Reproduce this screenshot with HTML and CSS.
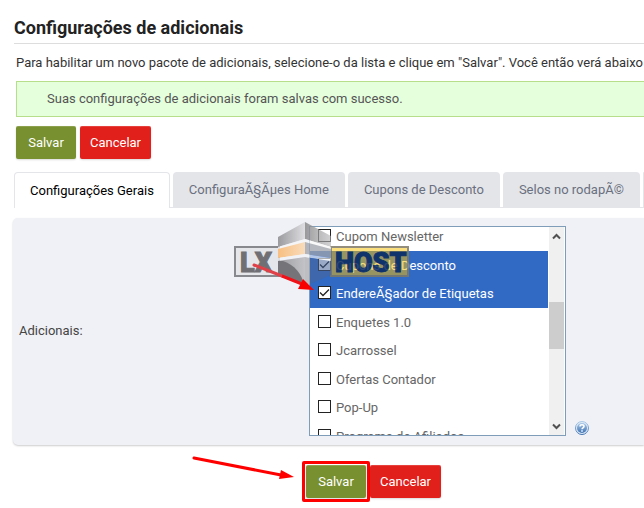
FILE: index.html
```html
<!DOCTYPE html>
<html lang="pt-BR">
<head>
<meta charset="utf-8">
<title>Configurações de adicionais</title>
<link rel="stylesheet" href="styles.css">
</head>
<body>
<main class="page">
  <h1 class="title">Configurações de adicionais</h1>
  <p class="intro">Para habilitar um novo pacote de adicionais, selecione-o da lista e clique em "Salvar". Você então verá abaixo</p>
  <div class="alert" role="status">Suas configurações de adicionais foram salvas com sucesso.</div>
  <div class="actions">
    <button class="btn save" type="button">Salvar</button>
    <button class="btn cancel" type="button">Cancelar</button>
  </div>
  <nav class="tabs">
    <a class="tab active" href="#gerais">Configurações Gerais</a>
    <a class="tab" href="#home">ConfiguraÃ§Ãµes Home</a>
    <a class="tab" href="#cupons">Cupons de Desconto</a>
    <a class="tab" href="#selos">Selos no rodapÃ©</a>
    <span class="tab rest"></span>
  </nav>
  <section class="panel" id="gerais">
    <span class="field-label" id="addons-label">Adicionais:</span>
    <div class="field">
      <div class="listbox" role="group" aria-labelledby="addons-label">
        <div class="options">
          <label class="option"><input type="checkbox">Cupom Newsletter</label>
          <label class="option selected"><input type="checkbox" checked>Cupons de Desconto</label>
          <label class="option selected"><input type="checkbox" checked>EndereÃ§ador de Etiquetas</label>
          <label class="option"><input type="checkbox">Enquetes 1.0</label>
          <label class="option"><input type="checkbox">Jcarrossel</label>
          <label class="option"><input type="checkbox">Ofertas Contador</label>
          <label class="option"><input type="checkbox">Pop-Up</label>
          <label class="option"><input type="checkbox">Programa de Afiliados</label>
        </div>
        <div class="scrollbar">
          <svg width="15" height="17" viewBox="0 0 15 17"><path d="M4 11.500 7.500 8l3.500 3.500" fill="none" stroke="#505050" stroke-width="2"/></svg>
          <div class="thumb"></div>
          <svg width="15" height="17" viewBox="0 0 15 17"><path d="M4 6.500 7.500 10 11 6.500" fill="none" stroke="#505050" stroke-width="2"/></svg>
        </div>
      </div>
      <svg class="help" width="14" height="14" viewBox="0 0 14 14">
        <defs><linearGradient id="hg" x1="0" y1="0" x2="0" y2="1"><stop offset="0" stop-color="#a9c8e8"/><stop offset="1" stop-color="#3f74b4"/></linearGradient></defs>
        <circle cx="7" cy="7" r="6.500" fill="#dfeaf5" stroke="url(#hg)"/>
        <circle cx="7" cy="7" r="5" fill="url(#hg)"/>
        <path d="M5 5.500C5 3.300 9 3.300 9 5.500 9 7 7 6.800 7 8.300M7 9.300v1.500" fill="none" stroke="#fff" stroke-width="1.500"/>
      </svg>
    </div>
    <svg class="watermark" width="176" height="66" viewBox="0 0 176 66">
      <defs>
        <linearGradient id="lt" x1="0" y1="0" x2="1" y2="0"><stop offset="0" stop-color="#8d8d90"/><stop offset="1" stop-color="#dcdcdf"/></linearGradient>
        <linearGradient id="rt" x1="0" y1="0" x2="1" y2="0"><stop offset="0" stop-color="#8a8a8c"/><stop offset="1" stop-color="#b4b4b6" stop-opacity=".7"/></linearGradient>
        <linearGradient id="or" x1="0" y1="0" x2="1" y2="0"><stop offset="0" stop-color="#f9b76c"/><stop offset="1" stop-color="#fbd9b2"/></linearGradient>
        <linearGradient id="dk" x1="0" y1="0" x2="1" y2="0"><stop offset="0" stop-color="#8e8e92"/><stop offset="1" stop-color="#bcbcc0"/></linearGradient>
      </defs>
      <path d="M1 25h44v29H1z" fill="#e4e5e8" stroke="#77787c" stroke-width="2"/>
      <text class="wm-text lx" x="6" y="50">LX</text>
      <path d="M97 25h77v29H97z" fill="#f8c003" fill-opacity=".6" stroke="#7f7a66" stroke-width="2"/>
      <text class="wm-text host" x="101" y="50">HOST</text>
      <path d="M44 15 71 0v17L44 25z" fill="url(#lt)"/>
      <path d="M71 0 97 14v11L71 17z" fill="url(#rt)"/>
      <path d="M44 25 71 17l26 8v4L71 21 44 29z" fill="#f7f7f9" fill-opacity=".8"/>
      <path d="M44 27 71 20v12L44 36z" fill="url(#or)"/>
      <path d="M71 20 97 27v9L71 32z" fill="#a0a4ac" fill-opacity=".9"/>
      <path d="M44 36 71 32l26 4v3l-26-4-27 4z" fill="#f2f4f8" fill-opacity=".8"/>
      <path d="M44 39 71 35v29L44 53z" fill="url(#dk)"/>
      <path d="M44 39h5C61 43 68 52 70 63L44 53z" fill="#606064"/>
      <path d="M76 36 97 39v14L76 62z" fill="#4a6698" fill-opacity=".65"/>
      <path d="M71 35v29l5-2V36z" fill="#a6a6ab" fill-opacity=".8"/>
    </svg>
    <svg class="arrow-list" width="64" height="30" viewBox="0 0 64 30">
      <path d="M2 2 30 13" stroke="#e04048" stroke-width="3" stroke-linecap="round"/>
      <path d="M30 13 50 21" stroke="#f01018" stroke-width="3"/>
      <path d="M62 27 46 26 51 16z" fill="#f80000"/>
    </svg>
  </section>
  <div class="footer">
    <svg class="arrow-save" width="104" height="26" viewBox="0 0 104 26">
      <path d="M3 3 90 20" stroke="#f00" stroke-width="3" stroke-linecap="round"/>
      <path d="M103 22 88 24 90 15z" fill="#f00"/>
    </svg>
    <span class="highlight"><button class="btn save" type="button">Salvar</button></span>
    <button class="btn cancel" type="button">Cancelar</button>
  </div>
</main>
</body>
</html>
```
FILE: styles.css
```css
* { box-sizing: border-box; }
body {
  margin: 0;
  background: #fff;
  color: #333;
  font: 13px/18px Roboto, sans-serif;
  overflow: hidden;
}
.page { padding: 16px 0 0 13px; }
.title {
  margin: 0 0 0 1px;
  height: 28px;
  border-bottom: 1px solid #ddd;
  color: #222;
  font-size: 18px;
  font-weight: 700;
  line-height: 24px;
}
.intro { margin: 10px 0 9px 3px; white-space: nowrap; }
.alert {
  margin-left: 3px;
  padding: 8px 30px;
  border: 1px solid #b7de8b;
  border-right: 0;
  background: #e5ffdd;
  color: #555;
}
.actions { display: flex; gap: 4px; margin: 9px 0 13px 3px; }
.btn {
  height: 33px;
  padding: 0;
  border: 0;
  border-radius: 2px;
  color: #fff;
  font: 400 13px/33px Roboto, sans-serif;
  box-shadow: inset 0 1px 0 rgba(255, 255, 255, .15), 0 1px 2px rgba(0, 0, 0, .15);
}
.save { width: 60px; background-color: #78902f; }
.cancel { width: 71px; background-color: #e2201b; }
.tabs {
  display: flex;
  gap: 3px;
  margin-left: 1px;
  border-bottom: 1px solid #e4e5e9;
}
.tab {
  flex: none;
  height: 35px;
  padding: 0 16px;
  border-radius: 4px 4px 0 0;
  background: #e4e5e9;
  color: #6a7080;
  line-height: 35px;
  text-decoration: none;
  white-space: nowrap;
}
.active {
  height: 36px;
  margin-bottom: -1px;
  padding: 0 15px;
  border: 1px solid #e4e5e9;
  border-bottom: 0;
  background: #fff;
  color: #000;
}
.rest { flex: 1; padding: 0; }
.panel {
  position: relative;
  display: flex;
  align-items: center;
  margin-top: 10px;
  padding: 8px 0 9px 6px;
  border-radius: 5px 0 0 5px;
  background: #f0f1f6;
  box-shadow: 0 1px 2px rgba(0, 0, 0, .2);
}
.field-label { width: 290px; color: #444; }
.field { display: flex; align-items: flex-end; gap: 9px; }
.listbox {
  display: flex;
  width: 257px;
  height: 210px;
  padding-right: 1px;
  border: 1px solid #7f9db9;
  background: #fff;
  overflow: hidden;
}
.options { flex: 1; margin: -5px 1px 0 0; }
.option {
  display: flex;
  align-items: center;
  gap: 5px;
  height: 28px;
  padding: 1px 0 0 8px;
  color: #666;
}
.option:nth-child(odd) { height: 29px; }
.selected { background: #316ac5; color: #fff; }
.option input {
  appearance: none;
  width: 13px;
  height: 13px;
  margin: 0 0 3px;
  border: 1px solid #222;
  background: #fff;
}
.option input:checked {
  background: #fff url("data:image/svg+xml,%3Csvg xmlns='http://www.w3.org/2000/svg' viewBox='0 0 11 11'%3E%3Cpath d='M1 5.500 4 8.500 10 2.500' fill='none' stroke='%23222' stroke-width='1.300'/%3E%3C/svg%3E");
}
.scrollbar {
  display: flex;
  flex-direction: column;
  justify-content: space-between;
  width: 15px;
  background: #f0f0f0;
}
.thumb { height: 47px; margin-bottom: 12px; background: #cdcdcd; }
.help { margin-bottom: 1px; }
.watermark { position: absolute; left: 221px; top: 4px; opacity: .85; }
.wm-text { font: 900 27px Roboto, sans-serif; stroke-width: 1px; }
.lx { fill: #5a5a5e; stroke: #5a5a5e; }
.host { fill: #0b2a5c; stroke: #0b2a5c; }
.arrow-list { position: absolute; left: 239px; top: 45px; }
.footer {
  position: relative;
  display: flex;
  align-items: center;
  margin: 16px 0 0 289px;
}
.highlight { padding: 1px; border: 3px solid #f00; border-radius: 2px; }
.highlight .btn { display: block; }
.arrow-save { position: absolute; left: -111px; top: -6px; }
```
